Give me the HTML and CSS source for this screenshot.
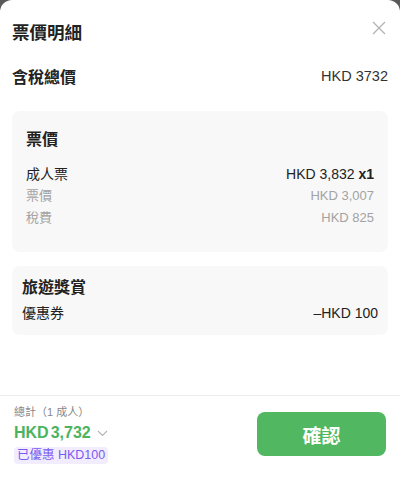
FILE: index.html
```html
<!DOCTYPE html>
<html lang="zh-Hant">
<head>
<meta charset="utf-8">
<link rel="stylesheet" href="styles.css">
</head>
<body>
<div class="sheet">
  <div class="content">
    <div class="header">
      <h1 class="title">票價明細</h1>
      <svg class="close" width="14" height="14" viewBox="0 0 14 14"><path d="M1 1L13 13M13 1L1 13" stroke="#b3b3b3" stroke-width="1.3" fill="none"/></svg>
    </div>
    <div class="total-row">
      <span class="total-label">含稅總價</span>
      <span class="total-value">HKD 3732</span>
    </div>
    <div class="card card-fare">
      <div class="card-title">票價</div>
      <div class="row main"><span>成人票</span><span>HKD 3,832 <b>x1</b></span></div>
      <div class="row sub"><span>票價</span><span>HKD 3,007</span></div>
      <div class="row sub"><span>稅費</span><span>HKD 825</span></div>
    </div>
    <div class="card card-reward">
      <div class="card-title">旅遊獎賞</div>
      <div class="row main"><span>優惠券</span><span>–HKD 100</span></div>
    </div>
  </div>
  <div class="footer">
    <div class="sum">
      <div class="sum-label">總計（1 成人）</div>
      <div class="sum-price">HKD<span class="num">3,732</span><svg class="chev" width="11" height="7" viewBox="0 0 11 7"><path d="M1 1L5.5 5.5L10 1" stroke="#b5b5b5" stroke-width="1.1" fill="none"/></svg></div>
      <span class="badge">已優惠 HKD100</span>
    </div>
    <button class="confirm">確認</button>
  </div>
</div>
</body>
</html>
```
FILE: styles.css
```css
html, body {
  margin: 0;
  padding: 0;
  background: #595959;
}
body {
  font-family: "Liberation Sans", "Noto Sans CJK TC", sans-serif;
  color: #222;
}
.sheet {
  width: 400px;
  height: 490px;
  background: #fff;
  border-radius: 12px 12px 0 0;
  display: flex;
  flex-direction: column;
  overflow: hidden;
}
.content {
  flex: 1;
  padding: 0 12px;
}
.header {
  display: flex;
  justify-content: space-between;
  align-items: center;
  height: 62px;
}
.title {
  margin: 0;
  font-size: 17.5px;
  font-weight: bold;
  color: #222;
}
.close {
  margin-right: 2px;
  margin-top: -6px;
}
.total-row {
  display: flex;
  justify-content: space-between;
  align-items: center;
  height: 24px;
  margin-top: 2px;
  margin-bottom: 23px;
}
.total-label {
  font-size: 16px;
  font-weight: bold;
}
.total-value {
  font-size: 14.5px;
  color: #333;
}
.card {
  background: #f8f8f8;
  border-radius: 8px;
}
.card-fare {
  padding: 18px 14px 23px;
}
.card-reward {
  margin-top: 14px;
  padding: 11px 10px 11px;
}
.card-title {
  font-size: 16px;
  font-weight: bold;
  line-height: 22px;
}
.card-fare .card-title {
  margin-bottom: 12px;
}
.card-reward .card-title {
  margin-bottom: 3px;
}
.row {
  display: flex;
  justify-content: space-between;
  align-items: center;
  line-height: 22px;
}
.row.main {
  font-size: 14px;
  color: #222;
}
.row.sub {
  font-size: 13px;
  color: #a3a3a3;
}
.row b {
  font-weight: bold;
}
.footer {
  border-top: 1px solid #ececec;
  height: 95px;
  box-sizing: border-box;
  display: flex;
  justify-content: space-between;
  align-items: flex-start;
  padding: 8px 14px 0 14px;
}
.sum-label {
  font-size: 11px;
  color: #888;
  line-height: 16px;
}
.sum-price {
  font-size: 16px;
  font-weight: bold;
  color: #4cb35e;
  line-height: 24px;
  margin-top: 1px;
  display: flex;
  align-items: center;
}
.sum-price .num {
  margin-left: 2px;
}
.chev {
  margin-left: 6px;
}
.badge {
  display: inline-block;
  margin-top: 2px;
  background: #f1edff;
  color: #7a5af0;
  font-size: 12.5px;
  line-height: 17px;
  padding: 0 3px;
  border-radius: 4px;
}
.confirm {
  margin-top: 8px;
  width: 129px;
  height: 44px;
  border: none;
  border-radius: 8px;
  background: #52b761;
  color: #fff;
  font-family: "Liberation Sans", "Noto Sans CJK TC", sans-serif;
  font-size: 19px;
  font-weight: bold;
}
```
